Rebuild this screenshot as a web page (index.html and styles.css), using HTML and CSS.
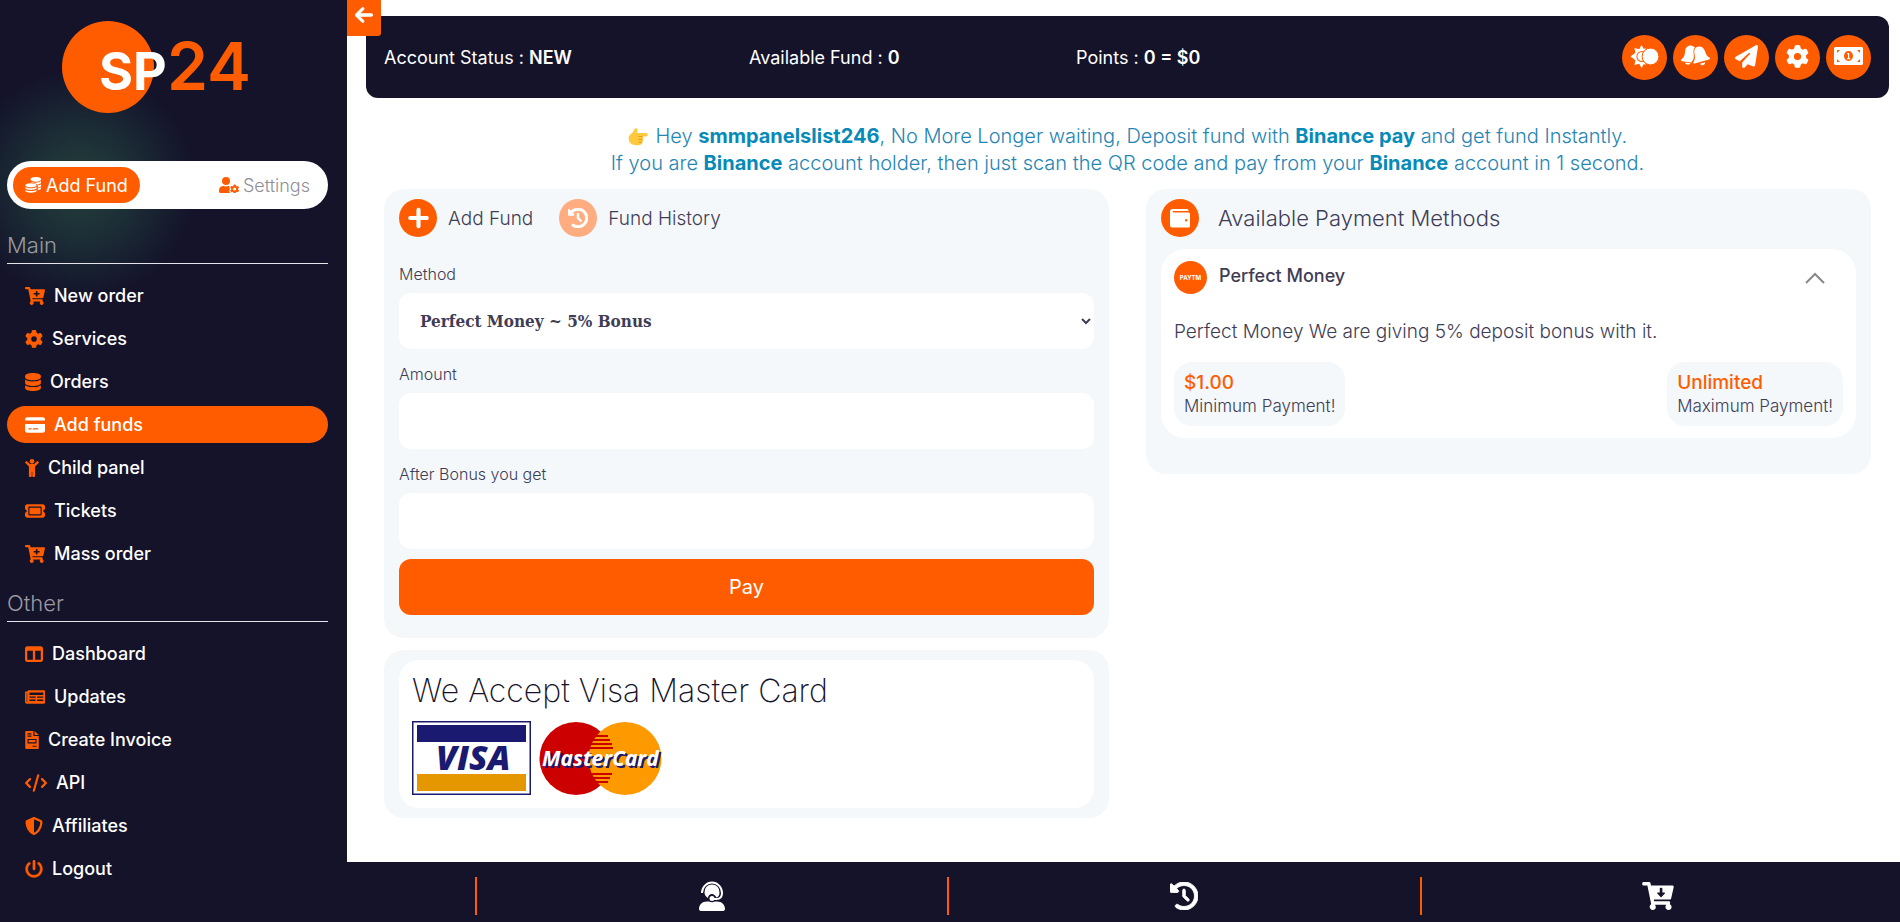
FILE: index.html
```html
<!DOCTYPE html>
<html lang="en">
<head>
<meta charset="utf-8">
<title>SP24 - Add funds</title>
<link rel="stylesheet" href="styles.css">
</head>
<body>
<svg class="sprite" aria-hidden="true">
  <symbol id="cart-base" viewBox="0 0 576 512"><path fill-rule="evenodd" d="M504.7 320H211.6l6.5 32h268.4c15.4 0 26.8 14.3 23.4 29.3l-5.5 24.3C523.1 414.7 536 433.8 536 456c0 31.2-25.5 56.4-56.8 56-29.8-.4-54.4-24.6-55.2-54.4-.4-16.3 6.1-31 16.8-41.6H231.2C241.6 426.2 248 440.3 248 456c0 31.8-26.5 57.4-58.7 55.9-28.5-1.3-51.8-24.4-53.3-52.9-1.2-22 10.4-41.5 28.1-51.6L93.9 64H24C10.7 64 0 53.3 0 40V24C0 10.7 10.7 0 24 0h102.5c11.4 0 21.2 8 23.5 19.2L159.2 64H552c15.4 0 26.8 14.3 23.4 29.3l-47.3 208C525.6 312.2 515.9 320 504.7 320zM408 168h-48v-40c0-8.8-7.2-16-16-16h-16c-8.8 0-16 7.2-16 16v40h-48c-8.8 0-16 7.2-16 16v16c0 8.800 7.200 16 16 16h48v40c0 8.800 7.200 16 16 16h16c8.800 0 16-7.200 16-16v-40h48c8.800 0 16-7.200 16-16v-16c0-8.800-7.200-16-16-16z"/></symbol>
  <symbol id="cart-down" viewBox="0 0 576 512"><path fill-rule="evenodd" d="M504.7 320H211.6l6.5 32h268.4c15.4 0 26.8 14.3 23.4 29.3l-5.5 24.3C523.1 414.7 536 433.8 536 456c0 31.2-25.5 56.4-56.8 56-29.8-.4-54.4-24.6-55.2-54.4-.4-16.3 6.1-31 16.8-41.6H231.2C241.6 426.2 248 440.3 248 456c0 31.8-26.5 57.4-58.7 55.9-28.5-1.3-51.8-24.4-53.3-52.9-1.2-22 10.4-41.5 28.1-51.6L93.9 64H24C10.7 64 0 53.3 0 40V24C0 10.7 10.7 0 24 0h102.5c11.4 0 21.2 8 23.5 19.2L159.2 64H552c15.4 0 26.8 14.3 23.4 29.3l-47.3 208C525.6 312.2 515.9 320 504.7 320zM320 120v72h-36c-11 0-16 12-9 20l60 62c5 5 13 5 18 0l60-62c7-8 2-20-9-20h-36v-72c0-9-7-16-16-16h-16c-9 0-16 7-16 16z"/></symbol>
  <symbol id="gear" viewBox="0 0 512 512"><path d="M495.9 166.6c3.2 8.7 .5 18.4-6.4 24.6l-43.3 39.4c1.100 8.300 1.700 16.800 1.700 25.400s-.6 17.100-1.700 25.400l43.300 39.400c6.900 6.200 9.600 15.900 6.400 24.600c-4.400 11.900-9.700 23.300-15.800 34.300l-4.700 8.100c-6.600 11-14 21.400-22.100 31.200c-5.900 7.200-15.700 9.600-24.500 6.800l-55.700-17.700c-13.400 10.300-28.200 18.900-44 25.400l-12.500 57.100c-2 9.100-9 16.300-18.200 17.800c-13.800 2.300-28 3.500-42.500 3.500s-28.700-1.200-42.500-3.500c-9.200-1.500-16.200-8.700-18.200-17.800l-12.500-57.100c-15.800-6.500-30.600-15.100-44-25.400L83.100 425.900c-8.800 2.800-18.600 .3-24.500-6.800c-8.100-9.800-15.500-20.200-22.100-31.200l-4.700-8.100c-6.100-11-11.400-22.400-15.800-34.300c-3.200-8.700-.5-18.400 6.400-24.600l43.300-39.400C64.600 273.100 64 264.600 64 256s.6-17.100 1.700-25.400L22.400 191.200c-6.900-6.200-9.600-15.900-6.400-24.600c4.400-11.900 9.700-23.300 15.800-34.300l4.700-8.100c6.600-11 14-21.400 22.100-31.200c5.900-7.200 15.700-9.600 24.500-6.800l55.700 17.700c13.400-10.300 28.200-18.900 44-25.400l12.500-57.100c2-9.100 9-16.300 18.200-17.800C227.300 1.200 241.500 0 256 0s28.700 1.200 42.500 3.500c9.200 1.500 16.200 8.700 18.200 17.800l12.500 57.100c15.800 6.500 30.600 15.100 44 25.400l55.700-17.700c8.800-2.800 18.600-.3 24.500 6.800c8.100 9.800 15.500 20.200 22.100 31.200l4.700 8.100c6.100 11 11.400 22.400 15.800 34.300zM256 336a80 80 0 1 0 0-160 80 80 0 1 0 0 160z"/></symbol>
  <symbol id="database" viewBox="0 0 448 512"><path d="M448 80v48c0 44.200-100.300 80-224 80S0 172.200 0 128V80C0 35.800 100.300 0 224 0S448 35.800 448 80zM393.200 214.700c20.800-7.400 39.900-16.900 54.800-28.600V288c0 44.200-100.300 80-224 80S0 332.200 0 288V186.100c14.900 11.800 34 21.200 54.800 28.600C99.700 230.700 159.500 240 224 240s124.300-9.300 169.200-25.300zM0 346.100c14.900 11.800 34 21.200 54.800 28.600C99.700 390.700 159.500 400 224 400s124.300-9.300 169.200-25.300c20.800-7.400 39.900-16.900 54.800-28.600V432c0 44.200-100.300 80-224 80S0 476.200 0 432V346.100z"/></symbol>
  <symbol id="card" viewBox="0 0 576 512"><path d="M64 32C28.700 32 0 60.700 0 96v32H576V96c0-35.300-28.700-64-64-64H64zM576 224H0V416c0 35.300 28.700 64 64 64H512c35.300 0 64-28.700 64-64V224zM112 352h64c8.800 0 16 7.200 16 16s-7.200 16-16 16H112c-8.800 0-16-7.200-16-16s7.200-16 16-16zm112 16c0-8.800 7.200-16 16-16H368c8.800 0 16 7.200 16 16s-7.200 16-16 16H240c-8.800 0-16-7.200-16-16z"/></symbol>
  <symbol id="child" viewBox="0 0 384 512"><circle cx="192" cy="66" r="66"/><path d="M10 74c12-13 33-13 45 0l78 70h118l78-70c12-13 33-13 45 0s13 33 0 45l-94 91v270c0 18-14 32-32 32h-16c-18 0-32-14-32-32V368h-16v112c0 18-14 32-32 32h-16c-18 0-32-14-32-32V210L10 119c-13-12-13-32 0-45z"/></symbol>
  <symbol id="ticket" viewBox="0 0 576 512"><path d="M64 64C28.700 64 0 92.700 0 128v64c0 8.800 7.400 15.700 15.700 18.600C34.500 217.100 48 235 48 256s-13.500 38.900-32.300 45.400C7.400 304.300 0 311.200 0 320v64c0 35.300 28.700 64 64 64H512c35.300 0 64-28.700 64-64V320c0-8.800-7.400-15.700-15.700-18.600C541.500 294.900 528 277 528 256s13.500-38.900 32.300-45.400c8.300-2.900 15.700-9.800 15.700-18.600V128c0-35.300-28.700-64-64-64H64zm64 112l0 160c0 8.800 7.200 16 16 16H432c8.800 0 16-7.200 16-16V176c0-8.800-7.200-16-16-16H144c-8.800 0-16 7.200-16 16zM96 160c0-17.700 14.300-32 32-32H448c17.700 0 32 14.300 32 32V352c0 17.700-14.300 32-32 32H128c-17.700 0-32-14.300-32-32V160z"/></symbol>
  <symbol id="columns" viewBox="0 0 512 512"><path d="M0 96C0 60.700 28.700 32 64 32H448c35.300 0 64 28.700 64 64V416c0 35.300-28.700 64-64 64H64c-35.300 0-64-28.700-64-64V96zm64 64V416H224V160H64zm384 0H288V416H448V160z"/></symbol>
  <symbol id="news" viewBox="0 0 576 512"><path fill-rule="evenodd" d="M552 64H112c-20.900 0-38.700 13.400-45.300 32H24C10.700 96 0 106.700 0 120v272c0 30.900 25.100 56 56 56h496c13.300 0 24-10.700 24-24V88c0-13.300-10.700-24-24-24zM48 392V144h16v248c0 4.400-3.600 8-8 8s-8-3.600-8-8zM128 128H528V196H128zM128 240H308V280H128zM348 240H528V280H348zM128 328H308V368H128zM348 328H528V368H348z"/></symbol>
  <symbol id="invoice" viewBox="0 0 384 512"><path fill-rule="evenodd" d="M24 0H232V128c0 9 7 16 16 16H384V488c0 13-11 24-24 24H24c-13 0-24-11-24-24V24C0 11 11 0 24 0zM264 0L384 112H264zM64 64V96H176V64zM64 128V160H176V128zM64 224V352H320V224zM96 256H288V320H96zM208 416V448H320V416z"/></symbol>
  <symbol id="code" viewBox="0 0 640 512"><path d="M392.800 1.200c-17-4.900-34.700 5-39.600 22l-128 448c-4.900 17 5 34.700 22 39.600s34.700-5 39.600-22l128-448c4.900-17-5-34.700-22-39.600zm80.600 120.100c-12.500 12.500-12.500 32.800 0 45.300L562.700 256l-89.400 89.400c-12.500 12.500-12.500 32.800 0 45.300s32.800 12.500 45.300 0l112-112c12.500-12.500 12.500-32.800 0-45.300l-112-112c-12.500-12.500-32.800-12.500-45.300 0zm-306.700 0c-12.500-12.500-32.800-12.500-45.300 0l-112 112c-12.500 12.500-12.500 32.800 0 45.300l112 112c12.500 12.500 32.800 12.500 45.300 0s12.500-32.800 0-45.300L77.300 256l89.400-89.400c12.500-12.500 12.500-32.800 0-45.300z"/></symbol>
  <symbol id="shield" viewBox="0 0 512 512"><path d="M256 0c4.600 0 9.200 1 13.400 2.900L457.700 82.800c22 9.300 38.400 31 38.300 57.200c-.5 99.200-41.300 280.700-213.600 363.200c-16.700 8-36.100 8-52.800 0C57.300 420.700 16.500 239.200 16 140c-.1-26.200 16.300-47.900 38.300-57.200L242.700 2.900C246.800 1 251.400 0 256 0zm0 66.800V444.800C394 378 431.100 230.100 432 141.400L256 66.800z"/></symbol>
  <symbol id="power" viewBox="0 0 512 512"><path stroke="currentColor" stroke-width="12" d="M288 32c0-17.700-14.300-32-32-32s-32 14.300-32 32V256c0 17.700 14.300 32 32 32s32-14.300 32-32V32zM143.500 120.600c13.600-11.300 15.400-31.500 4.100-45.100s-31.500-15.400-45.100-4.100C49.700 115.400 16 181.800 16 256c0 132.500 107.500 240 240 240s240-107.500 240-240c0-74.200-33.800-140.600-86.600-184.600c-13.600-11.300-33.800-9.400-45.100 4.100s-9.400 33.800 4.100 45.100c38.900 32.300 63.500 81 63.500 135.400c0 97.200-78.800 176-176 176s-176-78.800-176-176c0-54.400 24.700-103.100 63.500-135.400z"/></symbol>
  <symbol id="history" viewBox="0 0 512 512"><path stroke="currentColor" stroke-width="16" d="M75 75L41 41C25.900 25.900 0 36.600 0 57.900V168c0 13.300 10.700 24 24 24H134.100c21.400 0 32.100-25.900 17-41l-30.800-30.800C155 85.500 203 64 256 64c106 0 192 86 192 192s-86 192-192 192c-40.800 0-78.600-12.700-109.700-34.400c-14.500-10.100-34.400-6.600-44.600 7.900s-6.600 34.400 7.900 44.600C151.200 495 201.700 512 256 512c141.400 0 256-114.600 256-256S397.400 0 256 0C185.300 0 121.300 28.700 75 75zm181 53c-13.300 0-24 10.700-24 24V256c0 6.400 2.500 12.500 7 17l72 72c9.400 9.400 24.600 9.400 33.900 0s9.400-24.600 0-33.900l-65-65V152c0-13.300-10.700-24-24-24z"/></symbol>
  <symbol id="plane" viewBox="0 0 512 512"><path d="M498.100 5.600c10.100 7 15.400 19.100 13.500 31.200l-64 416c-1.500 9.700-7.400 18.200-16 23s-18.900 5.400-28 1.600L284 427.700l-68.500 74.100c-8.900 9.700-22.900 12.900-35.200 8.100S160 493.200 160 480V396.400c0-4 1.500-7.800 4.200-10.700L331.800 202.800c5.800-6.300 5.600-16-.4-22s-15.700-6.400-22-.7L106 360.800 17.700 316.600C7.100 311.300 .3 300.700 0 288.900s5.900-22.800 16.100-28.700l448-256c10.700-6.100 23.900-5.500 34 1.400z"/></symbol>
  <symbol id="arrow-left" viewBox="0 0 448 512"><path stroke="currentColor" stroke-width="24" d="M9.400 233.400c-12.500 12.500-12.500 32.800 0 45.300l160 160c12.500 12.500 32.800 12.500 45.300 0s12.500-32.800 0-45.300L109.200 288 416 288c17.700 0 32-14.300 32-32s-14.300-32-32-32l-306.700 0L214.600 118.600c12.500-12.500 12.500-32.800 0-45.300s-32.800-12.500-45.300 0l-160 160z"/></symbol>
  <symbol id="coins" viewBox="0 0 18 17"><ellipse cx="11.500" cy="2.500" rx="5.500" ry="2.500"/><path d="M7 5c2 1.500 8 1.400 10-.7v2c-.8 1-2.500 1.500-4.200 1.700C11.500 6.600 9 6 7 6zM13.500 9c1.500-.2 2.800-.7 3.500-1.300v2c-.7.8-2 1.300-3.500 1.500zM13.500 12.300c1.500-.2 2.800-.7 3.500-1.400v1.600c-.7.9-2 1.400-3.500 1.600z"/><ellipse cx="6.300" cy="8.800" rx="6" ry="2.200"/><path d="M.3 10.600c2.500 1.700 9.500 1.700 12 0v1.700c-1.700 2-10.300 2-12 0zM.3 13.700c2.500 1.600 9.500 1.600 12 0v1.500c-1.700 2-10.300 2-12 0z"/></symbol>
  <symbol id="user-gear" viewBox="0 0 640 512"><circle cx="224" cy="128" r="128"/><path d="M134 288h17c45 21 99 21 145 0 20 0 34 2 46 7-24 24-18 44 4 65-4 22-4 30 0 50-30 29-19 60 14 102H48c-27 0-48-21-48-48v-42c0-74 60-134 134-134z"/><path fill-rule="evenodd" d="M610 404c2-12 2-24 0-36l26-15c3-2 4-5 3-9-7-21-18-41-33-58-2-2-6-3-9-1l-26 15a114 114 0 0 0-31-18v-30c0-3-2-6-6-7a163 163 0 0 0-67 0c-3 1-6 4-6 7v30c-11 4-22 10-31 18l-26-15c-3-2-7-1-9 1-15 17-26 37-33 58-1 4 0 7 3 9l26 15c-2 12-2 24 0 36l-26 15c-3 2-4 5-3 9 7 21 18 41 33 58 2 2 6 3 9 1l26-15c9 8 20 14 31 18v30c0 3 2 6 6 7 22 5 45 5 67 0 4-1 6-4 6-7v-30c11-4 22-10 31-18l26 15c3 2 7 1 9-1 15-17 26-37 33-58 1-4 0-7-3-9zM501 435a49 49 0 1 1 0-98 49 49 0 0 1 0 98z"/></symbol>
  <symbol id="sun-moon" viewBox="0 0 29 23"><path d="M11.500 0l2.300 4 1.700-1v17l-1.700-1-2.300 4-2.300-4.200-4.800 1.300 1-4.900-4.900-3.700 4.900-3.700-1-4.900 4.800 1.300z"/><circle cx="12" cy="11.500" r="5.600" fill="#ff5c00"/><circle cx="12" cy="11.500" r="4.600"/><path d="M14.500 6a6.500 6.500 0 0 0-1.500 5.500 6.500 6.500 0 0 0 1.500 5.500" fill="none" stroke="#ff5c00" stroke-width="1.400"/><circle cx="20.500" cy="11.500" r="8.400" stroke="#ff5c00" stroke-width="1"/></symbol>
  <symbol id="bells" viewBox="0 0 29 22"><path d="M11.500.9c-4-1.300-7.200 1.500-7.400 5.200C3.900 10 3.200 12.500.3 14.500c-.7 1 .1 1.700.9 1.800l9 1.200c1-1.500 2.700-3.200 2.700-6 0-3.500-1.500-6 1.100-9.300zM4 17.600c.5 2.400 4.500 2.900 5.500.7z"/><path d="M15 2.500c3.500-2.200 7.300-.6 8.600 2.800 1.400 3.700 2.200 6.200 5 7.500.7.600.3 1.600-.6 1.800l-14.500 4c-1 .2-1.600-.8-1-1.500 2-3 1.500-5.300.9-8.800-.4-2.300-.1-4.500 1.600-5.800zM19 18.700l5-1.400c.5 3.300-3.500 4.200-5 1.400z"/></symbol>
  <symbol id="money" viewBox="0 0 29 18"><path fill-rule="evenodd" d="M1 0h27l1 1v16l-1 1H1l-1-1V1zM3 3v3l3-3zM26 3h-3l3 3zM3 15h3l-3-3zM26 15v-3l-3 3zM14.500 4a4.500 5 0 1 0 0 10 4.500 5 0 0 0 0-10zM13.200 6h2v5h1v1.200h-3.200V11h1V7.300h-.8z"/></symbol>
  <symbol id="plus" viewBox="0 0 448 512"><path stroke="currentColor" stroke-width="24" d="M256 80c0-18-14-32-32-32s-32 14-32 32v144H48c-18 0-32 14-32 32s14 32 32 32h144v144c0 18 14 32 32 32s32-14 32-32V288h144c18 0 32-14 32-32s-14-32-32-32H256z"/></symbol>
  <symbol id="wallet" viewBox="0 0 20 19"><path fill-rule="evenodd" d="M2.500 0H17a1.500 1.500 0 0 1 1.500 1.500V2H3.200c-.8 0-.8 1.500 0 1.500H18.500A1.500 1.500 0 0 1 20 5v12a1.500 1.500 0 0 1-1.500 1.500h-16A2.500 2.500 0 0 1 0 16V2.500A2.500 2.500 0 0 1 2.500 0zM16.200 10a1.200 1.200 0 1 0 0 2.400 1.200 1.200 0 0 0 0-2.400z"/></symbol>
  <symbol id="agent" viewBox="0 0 26 30"><path d="M3 12a10 10.500 0 0 1 20 0c0 5-3 6-5.500 6h-3" fill="none" stroke="currentColor" stroke-width="2"/><path d="M13 3.500a7.500 7.500 0 0 0-7.500 8c0 2.500 1.500 4.500 3.500 5.500 0-2.500 2-4 4-4s3 1.500 4.500 3.500c2-.5 3-2.500 3-5a7.500 7.500 0 0 0-7.500-8z"/><circle cx="13" cy="17.500" r="2.500"/><path d="M8 20.500h2c2 1 4 1 6 0h2c5 0 8 3.500 8 7.500 0 1-1 2-2 2H2c-1 0-2-1-2-2 0-4 3-7.500 8-7.500z"/></symbol>
</svg>

<div class="page">
  <aside class="sidebar">
    <a class="logo" href="#" aria-label="SP24 home">
      <svg width="220" height="96" viewBox="0 0 220 96">
        <circle class="logo-disc" cx="48" cy="48" r="46"/>
        <text class="logo-sp" x="39" y="71">SP</text>
        <text class="logo-24" x="107" y="71">24</text>
      </svg>
    </a>
    <div class="switcher">
      <a class="switch active" href="#"><svg class="ico" width="17" height="16"><use href="#coins"/></svg>Add Fund</a>
      <a class="switch" href="#"><svg class="ico" width="20" height="16"><use href="#user-gear"/></svg>Settings</a>
    </div>
    <h2 class="group-title">Main</h2>
    <nav class="menu" aria-label="Main">
      <a href="#"><svg class="ico" width="20" height="18"><use href="#cart-base"/></svg>New order</a>
      <a href="#"><svg class="ico" width="18" height="18"><use href="#gear"/></svg>Services</a>
      <a href="#"><svg class="ico" width="16" height="18"><use href="#database"/></svg>Orders</a>
      <a class="active" href="#"><svg class="ico" width="20" height="18"><use href="#card"/></svg>Add funds</a>
      <a href="#"><svg class="ico" width="14" height="18"><use href="#child"/></svg>Child panel</a>
      <a href="#"><svg class="ico" width="20" height="18"><use href="#ticket"/></svg>Tickets</a>
      <a href="#"><svg class="ico" width="20" height="18"><use href="#cart-base"/></svg>Mass order</a>
    </nav>
    <h2 class="group-title">Other</h2>
    <nav class="menu" aria-label="Other">
      <a href="#"><svg class="ico" width="18" height="18"><use href="#columns"/></svg>Dashboard</a>
      <a href="#"><svg class="ico" width="20" height="18"><use href="#news"/></svg>Updates</a>
      <a href="#"><svg class="ico" width="14" height="18"><use href="#invoice"/></svg>Create Invoice</a>
      <a href="#"><svg class="ico" width="22" height="18"><use href="#code"/></svg>API</a>
      <a href="#"><svg class="ico" width="18" height="18"><use href="#shield"/></svg>Affiliates</a>
      <a href="#"><svg class="ico" width="18" height="18"><use href="#power"/></svg>Logout</a>
    </nav>
  </aside>

  <main class="main">
    <button class="collapse" type="button" aria-label="Collapse menu"><svg class="ico" width="18" height="20"><use href="#arrow-left"/></svg></button>
    <header class="topbar">
      <div class="stats">
        <span>Account Status : <b>NEW</b></span>
        <span>Available Fund : <b>0</b></span>
        <span>Points : <b>0 = $0</b></span>
      </div>
      <div class="actions">
        <button class="round" type="button" aria-label="Theme"><svg class="ico" width="29" height="23"><use href="#sun-moon"/></svg></button>
        <button class="round" type="button" aria-label="Notifications"><svg class="ico" width="29" height="22"><use href="#bells"/></svg></button>
        <button class="round" type="button" aria-label="Messages"><svg class="ico" width="23" height="23"><use href="#plane"/></svg></button>
        <button class="round" type="button" aria-label="Settings"><svg class="ico" width="23" height="23"><use href="#gear"/></svg></button>
        <button class="round" type="button" aria-label="Funds"><svg class="ico" width="29" height="18"><use href="#money"/></svg></button>
      </div>
    </header>

    <p class="notice">
      <svg class="hand" width="20" height="18" viewBox="0 0 20 18" role="img" aria-label="pointing right"><path fill="#ffc83d" d="M1 8c1-2 4-3 5-6 .5-2 3-2.500 3.500-.8.300 1.300-.3 2.800-.8 3.800H18a1.800 1.800 0 0 1 0 3.600h-3.500c1.200.6 1.200 2.400 0 2.900 1 .7.800 2.300-.4 2.700.5 1-.3 2.300-1.600 2.500-4 1-9 .8-11-2.700-.8-2-1-4-.5-6z"/><path d="M10.500 8.600h4M10.500 11.500h4M10.500 14.200h3.500" stroke="#e59b1b" fill="none"/></svg>
      Hey <b>smmpanelslist246</b>, No More Longer waiting, Deposit fund with <b>Binance pay</b> and get fund Instantly.<br>
      If you are <b>Binance</b> account holder, then just scan the QR code and pay from your <b>Binance</b> account in 1 second.
    </p>

    <div class="columns">
      <div class="stack">
        <section class="panel">
          <div class="tabs">
            <button class="tab" type="button"><span class="badge"><svg class="ico" width="21" height="24"><use href="#plus"/></svg></span>Add Fund</button>
            <button class="tab" type="button"><span class="badge faded"><svg class="ico" width="20" height="20"><use href="#history"/></svg></span>Fund History</button>
          </div>
          <form class="form">
            <label for="method">Method</label>
            <select id="method" class="field"><option>Perfect Money ~ 5% Bonus</option></select>
            <label for="amount">Amount</label>
            <input id="amount" class="field" type="text">
            <label for="after">After Bonus you get</label>
            <input id="after" class="field" type="text">
            <button class="pay" type="button">Pay</button>
          </form>
        </section>
        <section class="panel">
          <div class="cards">
            <h1>We Accept Visa Master Card</h1>
            <svg class="card-logos" width="280" height="76" viewBox="0 0 280 76" role="img" aria-label="Visa and MasterCard">
              <rect x=".75" y=".75" width="117.500" height="72.500" fill="#fff" stroke="#1a1a70" stroke-width="1.500"/>
              <rect x="5" y="4" width="109" height="17" fill="#1a1a70"/>
              <rect x="5" y="53" width="109" height="17" fill="#e59700"/>
              <text class="visa" x="24" y="49">VISA</text>
              <circle cx="164" cy="37.500" r="36.500" fill="#c00"/>
              <circle cx="213" cy="37.500" r="36.500" fill="#f90"/>
              <path d="M183 15h13M179 19h19M177 23h23M176 27h25M176 53h24M178 57h20M181 61h15" stroke="#c00" stroke-width="2"/>
              <text class="mc mc-shadow" x="132" y="47">MasterCard</text>
              <text class="mc" x="130" y="45">MasterCard</text>
            </svg>
          </div>
        </section>
      </div>

      <section class="panel methods">
        <h2 class="methods-title"><span class="badge"><svg class="ico" width="20" height="19"><use href="#wallet"/></svg></span>Available Payment Methods</h2>
        <article class="method">
          <div class="method-head">
            <span class="badge brand">PAYTM</span>
            <h3>Perfect Money</h3>
            <button class="toggle" type="button" aria-label="Collapse Perfect Money"><svg width="20" height="12" viewBox="0 0 20 12"><path d="M1 11l9-9 9 9" fill="none" stroke="#888" stroke-width="2"/></svg></button>
          </div>
          <p class="method-text">Perfect Money We are giving 5% deposit bonus with it.</p>
          <div class="limits">
            <div class="limit"><strong>$1.00</strong><span>Minimum Payment!</span></div>
            <div class="limit"><strong>Unlimited</strong><span>Maximum Payment!</span></div>
          </div>
        </article>
      </section>
    </div>
  </main>

  <footer class="footer">
    <span class="foot-cell"></span>
    <a class="foot-cell" href="#" aria-label="Support"><svg class="ico" width="26" height="30"><use href="#agent"/></svg></a>
    <a class="foot-cell" href="#" aria-label="History"><svg class="ico" width="28" height="28"><use href="#history"/></svg></a>
    <a class="foot-cell" href="#" aria-label="New order"><svg class="ico" width="32" height="28"><use href="#cart-down"/></svg></a>
  </footer>
</div>
</body>
</html>
```
FILE: styles.css
```css
:root {
  --navy: #14132a;
  --orange: #ff5c00;
  --pale: #f4f8fb;
  --ink: #3f3d56;
}

* { box-sizing: border-box; }

body {
  margin: 0;
  font-family: Inter, "Open Sans", sans-serif;
  font-size: 18px;
  color: var(--ink);
  background: #fff;
}

h1, h2, h3, p { margin: 0; font-weight: 300; }
a { color: inherit; text-decoration: none; }
button { font: inherit; color: inherit; border: 0; padding: 0; background: none; cursor: pointer; }
.sprite { display: none; }
.ico { fill: currentColor; flex: none; overflow: visible; }

.page {
  display: grid;
  grid-template-columns: 347px 1fr;
  grid-template-rows: 1fr auto;
  min-height: 100vh;
}

/* Sidebar */
.sidebar {
  grid-area: 1 / 1 / 3 / 2;
  z-index: 1;
  padding: 19px 19px 0 7px;
  color: #fff;
  background: radial-gradient(circle at 80px 185px, #24403c 0, #1b2b35 60px, transparent 115px) var(--navy);
}
.logo { display: block; height: 142px; padding-left: 53px; }
.logo-disc { fill: var(--orange); }
.logo-sp { font-size: 52px; font-weight: 700; fill: #fff; }
.logo-24 { font-size: 66px; font-weight: 600; fill: var(--orange); }

.switcher {
  display: flex;
  justify-content: space-between;
  margin-bottom: 5px;
  padding: 6px;
  border-radius: 24px;
  background: #fff;
}
.switch {
  display: flex;
  align-items: center;
  gap: 4px;
  height: 36px;
  padding: 0 12px;
  border-radius: 18px;
  font-size: 18px;
  font-weight: 300;
  color: #8f8f98;
}
.switch .ico { color: var(--orange); }
.switch.active, .switch.active .ico { color: #fff; }
.switch.active { background: var(--orange); font-weight: 400; }

.group-title {
  margin-bottom: 13px;
  padding: 18px 0 4px;
  border-bottom: 1px solid #e4e4ea;
  font-size: 22px;
  line-height: 27px;
  color: #9a9aa2;
}
.menu { display: grid; gap: 6px; }
.menu a {
  display: flex;
  align-items: center;
  gap: 9px;
  height: 37px;
  padding: 0 18px;
  border-radius: 19px;
  font-weight: 500;
}
.menu .ico { color: var(--orange); }
.menu .active { background: var(--orange); }
.menu .active .ico { color: #fff; }

/* Main area */
.main {
  position: relative;
  grid-area: 1 / 2;
  padding: 16px 11px 44px 19px;
}
.collapse {
  position: absolute;
  top: 0;
  left: 0;
  display: grid;
  place-items: center;
  width: 34px;
  height: 36px;
  padding-bottom: 6px;
  border-radius: 0 0 3px 0;
  color: #fff;
  background: var(--orange);
}
.topbar {
  display: flex;
  justify-content: space-between;
  align-items: center;
  min-height: 82px;
  padding: 0 18px;
  border-radius: 12px;
  color: #fff;
  background: var(--navy);
}
.stats { display: grid; grid-template-columns: 365px 327px auto; }
.stats b { font-weight: 600; }
.actions { display: flex; gap: 6px; }
.round {
  display: grid;
  place-items: center;
  width: 45px;
  height: 45px;
  padding-bottom: 2px;
  border-radius: 50%;
  color: #fff;
  background: var(--orange);
}

.notice {
  padding: 25px 0 12px;
  font-size: 20px;
  font-weight: 300;
  line-height: 27px;
  text-align: center;
  color: #2585b5;
}
.notice b { font-weight: 700; color: #078ab8; }
.hand { margin-right: 2px; vertical-align: -3px; }

.columns {
  display: grid;
  grid-template-columns: 1fr 1fr;
  align-items: start;
  gap: 37px;
  padding: 0 18px;
}
.stack { display: grid; gap: 12px; }
.panel { padding: 10px 15px; border-radius: 20px; background: var(--pale); }

.tabs { display: flex; gap: 26px; }
.tab { display: flex; align-items: center; gap: 11px; font-size: 19px; font-weight: 300; }
.badge {
  display: grid;
  place-items: center;
  flex: none;
  width: 38px;
  height: 38px;
  border-radius: 50%;
  color: #fff;
  background: var(--orange);
}
.faded { background: #ffac80; }

.form { display: grid; padding: 12px 0 13px; }
.form label { padding: 14px 0 8px; font-size: 16px; line-height: 22px; font-weight: 300; }
.form .field {
  width: 100%;
  height: 56px;
  padding: 0 17px;
  border: 0;
  border-radius: 12px;
  font: 700 17px "DejaVu Serif Condensed", "DejaVu Serif", serif;
  color: var(--ink);
  background: #fff;
}
.pay {
  height: 56px;
  margin-top: 10px;
  border-radius: 12px;
  font-size: 20px;
  color: #fff;
  background: var(--orange);
}

.cards { padding: 11px 13px; border-radius: 20px; background: #fff; }
.cards h1 { padding-bottom: 11px; font-size: 32px; font-weight: 200; line-height: 39px; color: #14132a; }
.card-logos { display: block; }
.visa { font: italic 800 34px "Open Sans", sans-serif; fill: #1a1a70; }
.mc { font: italic 700 21px "Open Sans", sans-serif; fill: #fff; }
.mc-shadow { fill: #1a1a70; }

.methods { padding-bottom: 36px; }
.methods-title { display: flex; align-items: center; gap: 19px; font-size: 22px; }
.method { margin-top: 12px; padding: 12px 13px; border-radius: 24px; background: #fff; }
.method-head { display: flex; align-items: center; gap: 12px; }
.method-head h3 { flex: 1; padding-bottom: 4px; font-size: 18px; font-weight: 500; }
.brand { width: 33px; height: 33px; font-size: 6px; font-weight: 700; }
.toggle { padding-right: 18px; }
.method-text { padding: 25px 0 18px; font-size: 19px; line-height: 25px; }
.limits { display: flex; justify-content: space-between; }
.limit {
  display: grid;
  padding: 9px 10px 8px;
  border-radius: 18px;
  font-size: 17px;
  font-weight: 300;
  line-height: 23px;
  background: var(--pale);
}
.limit strong { font-size: 19px; font-weight: 500; line-height: 24px; color: var(--orange); }

/* Bottom bar */
.footer {
  grid-area: 2 / 1 / 3 / 3;
  display: grid;
  grid-template-columns: repeat(4, 1fr);
  padding: 15px 6px 8px 4px;
  background: var(--navy);
}
.foot-cell {
  display: grid;
  place-items: center;
  height: 38px;
  border-right: 2px solid var(--orange);
  color: #fff;
}
.foot-cell:last-child { border-right: 0; }
```
